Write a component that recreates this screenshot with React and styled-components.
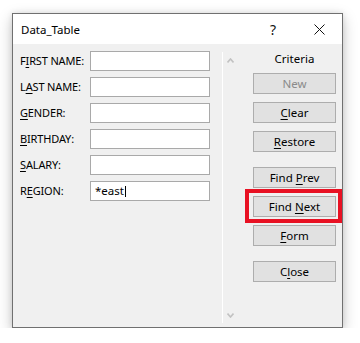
import React from "react";
import styled, { createGlobalStyle } from "styled-components";

const Global = createGlobalStyle`
  html, body { margin: 0; padding: 0; background: #ffffff; }
  body { font-family: "Noto Sans", "Open Sans", Arial, sans-serif; color: #000; }
  * { box-sizing: border-box; }
`;

const Window = styled.div`
  margin: 13px 0 0 12px;
  width: 331px;
  height: 315px;
  border: 1px solid #707070;
  background: #f0f0f0;
  display: flex;
  flex-direction: column;
  box-shadow: 0 5px 14px rgba(0, 0, 0, 0.22), 0 0 6px rgba(0, 0, 0, 0.1);
`;

const TitleBar = styled.div`
  height: 30px;
  background: #ffffff;
  display: flex;
  align-items: center;
  padding-left: 8px;
  font-size: 11.5px;
`;

const Title = styled.div`
  flex: 1;
`;

const CaptionButton = styled.div`
  width: 46px;
  height: 30px;
  display: flex;
  align-items: center;
  justify-content: center;
  font-size: 14px;
  color: #111;
`;

const Body = styled.div`
  flex: 1;
  display: flex;
  padding-top: 7px;
`;

const FormGrid = styled.div`
  display: grid;
  grid-template-columns: 70px 120px;
  grid-auto-rows: 20px;
  row-gap: 6px;
  padding-left: 7px;
  align-content: start;
`;

const Label = styled.div`
  font-size: 11px;
  line-height: 20px;
  white-space: nowrap;
  letter-spacing: -0.15px;
`;

const Mn = styled.span`
  text-decoration: underline;
  text-underline-offset: 2px;
  text-decoration-thickness: 1px;
`;

const Field = styled.div`
  border: 1px solid #a9a9a9;
  background: #ffffff;
  height: 20px;
  font-size: 11.5px;
  line-height: 18px;
  padding-left: 4px;
  display: flex;
  align-items: center;
`;

const Caret = styled.span`
  display: inline-block;
  width: 1px;
  height: 11px;
  background: #000;
  margin-left: 1px;
`;

const Gutter = styled.div`
  margin: 1px 0 4px 12px;
  width: 31px;
  border-left: 1px solid #ffffff;
  display: flex;
  flex-direction: column;
  justify-content: space-between;
  padding: 6px 0 5px 4px;
`;

const ButtonColumn = styled.div`
  width: 83px;
  display: flex;
  flex-direction: column;
`;

const Caption = styled.div`
  font-size: 11.5px;
  line-height: 16px;
  height: 16px;
  text-align: center;
  margin-bottom: 6px;
`;

const Slot = styled.div`
  position: relative;
  margin-top: ${(p) => (p.$wide ? "15px" : "8px")};
  &:first-of-type { margin-top: 0; }
`;

const Button = styled.div`
  height: 21px;
  border: 1px solid #adadad;
  background: #e1e1e1;
  font-size: 11.5px;
  line-height: 19px;
  text-align: center;
  color: ${(p) => (p.$disabled ? "#8a8a8a" : "#000")};
`;

const Highlight = styled.div`
  position: absolute;
  left: -8px;
  top: -7px;
  width: 97px;
  height: 34px;
  border: 4px solid #e81123;
  pointer-events: none;
`;

const Chevron = ({ up }) => (
  <svg width="7" height="5" viewBox="0 0 7 5">
    <polyline
      points={up ? "0.5,4.5 3.5,1 6.5,4.5" : "0.5,0.5 3.5,4 6.5,0.5"}
      fill="none"
      stroke="#c2c2c2"
      strokeWidth="1.6"
    />
  </svg>
);

const fields = [
  [["F", "I", "RST NAME:"], ""],
  [["L", "A", "ST NAME:"], ""],
  [["", "G", "ENDER:"], ""],
  [["", "B", "IRTHDAY:"], ""],
  [["", "S", "ALARY:"], ""],
  [["R", "E", "GION:"], "*east"],
];

const buttons = [
  { pre: "New", key: "", post: "", disabled: true },
  { pre: "", key: "C", post: "lear" },
  { pre: "", key: "R", post: "estore" },
  { pre: "Find ", key: "P", post: "rev", wide: true },
  { pre: "Find ", key: "N", post: "ext", highlight: true },
  { pre: "", key: "F", post: "orm" },
  { pre: "C", key: "l", post: "ose", wide: true },
];

export default function App() {
  return (
    <>
      <Global />
      <Window>
        <TitleBar>
          <Title>Data_Table</Title>
          <CaptionButton>?</CaptionButton>
          <CaptionButton>
            <svg width="11" height="11" viewBox="0 0 11 11">
              <path d="M0.5 0.5 L10.5 10.5 M10.5 0.5 L0.5 10.5" stroke="#111" strokeWidth="1" />
            </svg>
          </CaptionButton>
        </TitleBar>
        <Body>
          <FormGrid>
            {fields.map(([[a, m, b], value], i) => (
              <React.Fragment key={i}>
                <Label>
                  {a}
                  <Mn>{m}</Mn>
                  {b}
                </Label>
                <Field>
                  {value}
                  {value && <Caret />}
                </Field>
              </React.Fragment>
            ))}
          </FormGrid>
          <Gutter>
            <Chevron up />
            <Chevron />
          </Gutter>
          <ButtonColumn>
            <Caption>Criteria</Caption>
            <div>
              {buttons.map((b, i) => (
                <Slot key={i} $wide={b.wide}>
                  <Button $disabled={b.disabled}>
                    {b.pre}
                    {b.key && <Mn>{b.key}</Mn>}
                    {b.post}
                  </Button>
                  {b.highlight && <Highlight />}
                </Slot>
              ))}
            </div>
          </ButtonColumn>
        </Body>
      </Window>
    </>
  );
}
